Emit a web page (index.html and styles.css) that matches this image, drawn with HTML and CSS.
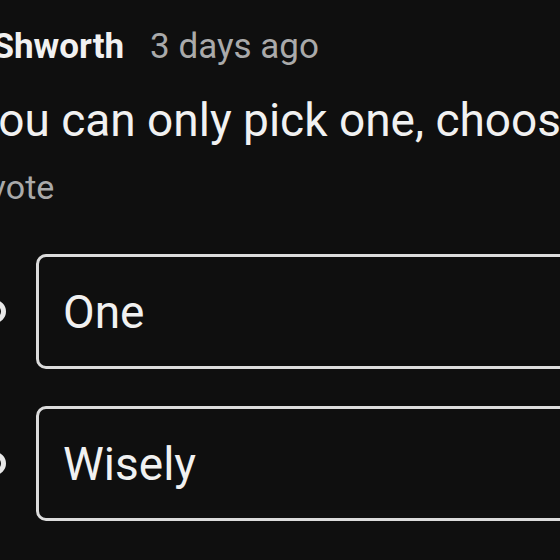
FILE: index.html
```html
<!DOCTYPE html>
<html>
<head>
<meta charset="utf-8">
<link rel="stylesheet" href="styles.css">
</head>
<body>
<div class="post">
  <div class="header"><span class="author">@Shworth</span><span class="time">3 days ago</span></div>
  <p class="text">You can only pick one, choose wisely</p>
  <div class="votes">1 vote</div>
  <div class="options">
    <div class="option"><span class="radio"></span><div class="box">One</div></div>
    <div class="option"><span class="radio"></span><div class="box">Wisely</div></div>
  </div>
</div>
</body>
</html>
```
FILE: styles.css
```css
html, body {
  margin: 0;
  padding: 0;
  background: #0f0f0f;
  overflow: hidden;
  width: 560px;
  height: 560px;
}
.post {
  margin-left: -28px;
  padding-top: 26px;
  font-family: Roboto, "Liberation Sans", sans-serif;
  color: #f1f1f1;
  width: 900px;
}
.header {
  display: flex;
  align-items: baseline;
  gap: 26px;
  margin-left: -11px;
  height: 42px;
  line-height: 42px;
  white-space: nowrap;
}
.author {
  font-size: 35px;
  font-weight: 700;
  color: #f1f1f1;
}
.time {
  font-size: 35px;
  color: #aaaaaa;
}
.text {
  margin: 26px 0 0;
  font-size: 46px;
  line-height: 52px;
  white-space: nowrap;
}
.votes {
  margin-top: 21px;
  margin-left: -10px;
  font-size: 34px;
  line-height: 40px;
  color: #aaaaaa;
  white-space: nowrap;
}
.options {
  margin-top: 47px;
  display: flex;
  flex-direction: column;
  gap: 37px;
}
.option {
  display: flex;
  align-items: center;
  gap: 30px;
  margin-left: 11px;
}
.radio {
  box-sizing: border-box;
  width: 23px;
  height: 23px;
  border: 5px solid #e8e8e8;
  border-radius: 50%;
  flex: none;
}
.box {
  box-sizing: border-box;
  flex: 1;
  height: 115px;
  border: 3px solid #dcdcdc;
  border-radius: 10px;
  display: flex;
  align-items: center;
  padding-left: 24px;
  font-size: 46px;
  color: #f1f1f1;
}
```
